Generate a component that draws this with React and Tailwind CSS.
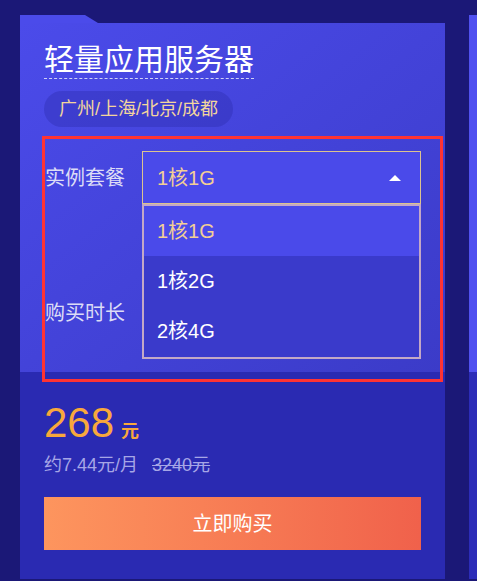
import { useState } from 'react';

const FONT = { fontFamily: '"Liberation Sans", "Noto Sans CJK SC", sans-serif' };

const PLANS = ['1核1G', '1核2G', '2核4G'];

function Card({ children, dim }) {
  return (
    <div className="relative w-[425px] shrink-0 h-[556px] flex flex-col">
      {/* folder tab on the top-left corner */}
      <div
        className={`absolute -top-2 left-0 h-2 w-[78px] ${dim ? 'bg-[#5050f0]' : 'bg-[#4b4bea]'}`}
        style={{ clipPath: 'polygon(0 0, 65px 0, 78px 100%, 0 100%)' }}
      />
      {children}
    </div>
  );
}

function Select({ value, open }) {
  return (
    <div className="flex h-[53px] w-[279px] items-center justify-between border border-[#dcc38f] bg-[#4a4aea] pl-[14px] pr-[19px]">
      <span className="text-[20px] text-[#f3cf94]">{value}</span>
      <span
        className={`h-0 w-0 border-x-[6px] border-x-transparent ${
          open ? 'border-b-[6px] border-b-white' : 'border-t-[6px] border-t-white'
        }`}
      />
    </div>
  );
}

export default function App() {
  const [plan, setPlan] = useState('1核1G');

  return (
    <div className="h-[581px] w-[477px] overflow-hidden bg-[#1b1877]" style={FONT}>
      <div className="flex gap-6 pl-5 pt-[23px]">
        <Card>
          {/* upper half */}
          <div className="h-[349px] bg-gradient-to-br from-[#4b4bea] to-[#3b3bc8] px-6 pt-[19px]">
            <h1 className="inline-block border-b border-dashed border-[#cfcff5] text-[30px] leading-[36px] text-white">
              轻量应用服务器
            </h1>
            <div className="mt-3">
              <span className="inline-flex h-9 items-center rounded-full bg-[#2e2eb0]/40 px-[15px] text-[18px] text-[#f3d59c]">
                广州/上海/北京/成都
              </span>
            </div>

            <div className="relative ml-px mt-3 h-[240px] w-[395px] outline-[3px] outline-[#ff3333]">
              <div className="flex items-center pt-3">
                <span className="w-[97px] text-[20px] text-[#dcdcf6]">实例套餐</span>
                <Select value={plan} open />
              </div>
              <div className="mt-[82px] flex items-center">
                <span className="w-[97px] text-[20px] text-[#dcdcf6]">购买时长</span>
                <Select value="" />
              </div>

              {/* open dropdown list */}
              <ul className="absolute left-[97px] top-[65px] w-[279px] border-2 border-[#c3a8c6] bg-[#3a3acb] pb-[1px]">
                {PLANS.map((p) => (
                  <li
                    key={p}
                    onClick={() => setPlan(p)}
                    className={`flex h-[50px] cursor-pointer items-center pl-[13px] text-[20px] ${
                      p === plan ? 'bg-[#4a4aea] text-[#f3cf94]' : 'text-white'
                    }`}
                  >
                    {p}
                  </li>
                ))}
              </ul>
            </div>
          </div>

          {/* lower half */}
          <div className="flex-1 bg-[#2a2ab2] px-6 pt-[27px]">
            <div className="flex items-baseline text-[#f8a83c]">
              <span className="text-[42px] leading-[48px]">268</span>
              <span className="ml-[7px] text-[18px] font-bold">元</span>
            </div>
            <div className="mt-[6px] flex text-[18px] leading-6 text-[#a6a6e6]">
              <span>约7.44元/月</span>
              <span className="ml-[14px] line-through">3240元</span>
            </div>
            <button className="mt-5 flex h-[53px] w-full items-center justify-center bg-gradient-to-r from-[#fd955e] to-[#f0614b] text-[20px] text-white">
              立即购买
            </button>
          </div>
        </Card>

        <Card dim>
          <div className="h-[349px] bg-[#5050f0]" />
          <div className="flex-1 bg-[#2c2cb8]" />
        </Card>
      </div>
    </div>
  );
}
